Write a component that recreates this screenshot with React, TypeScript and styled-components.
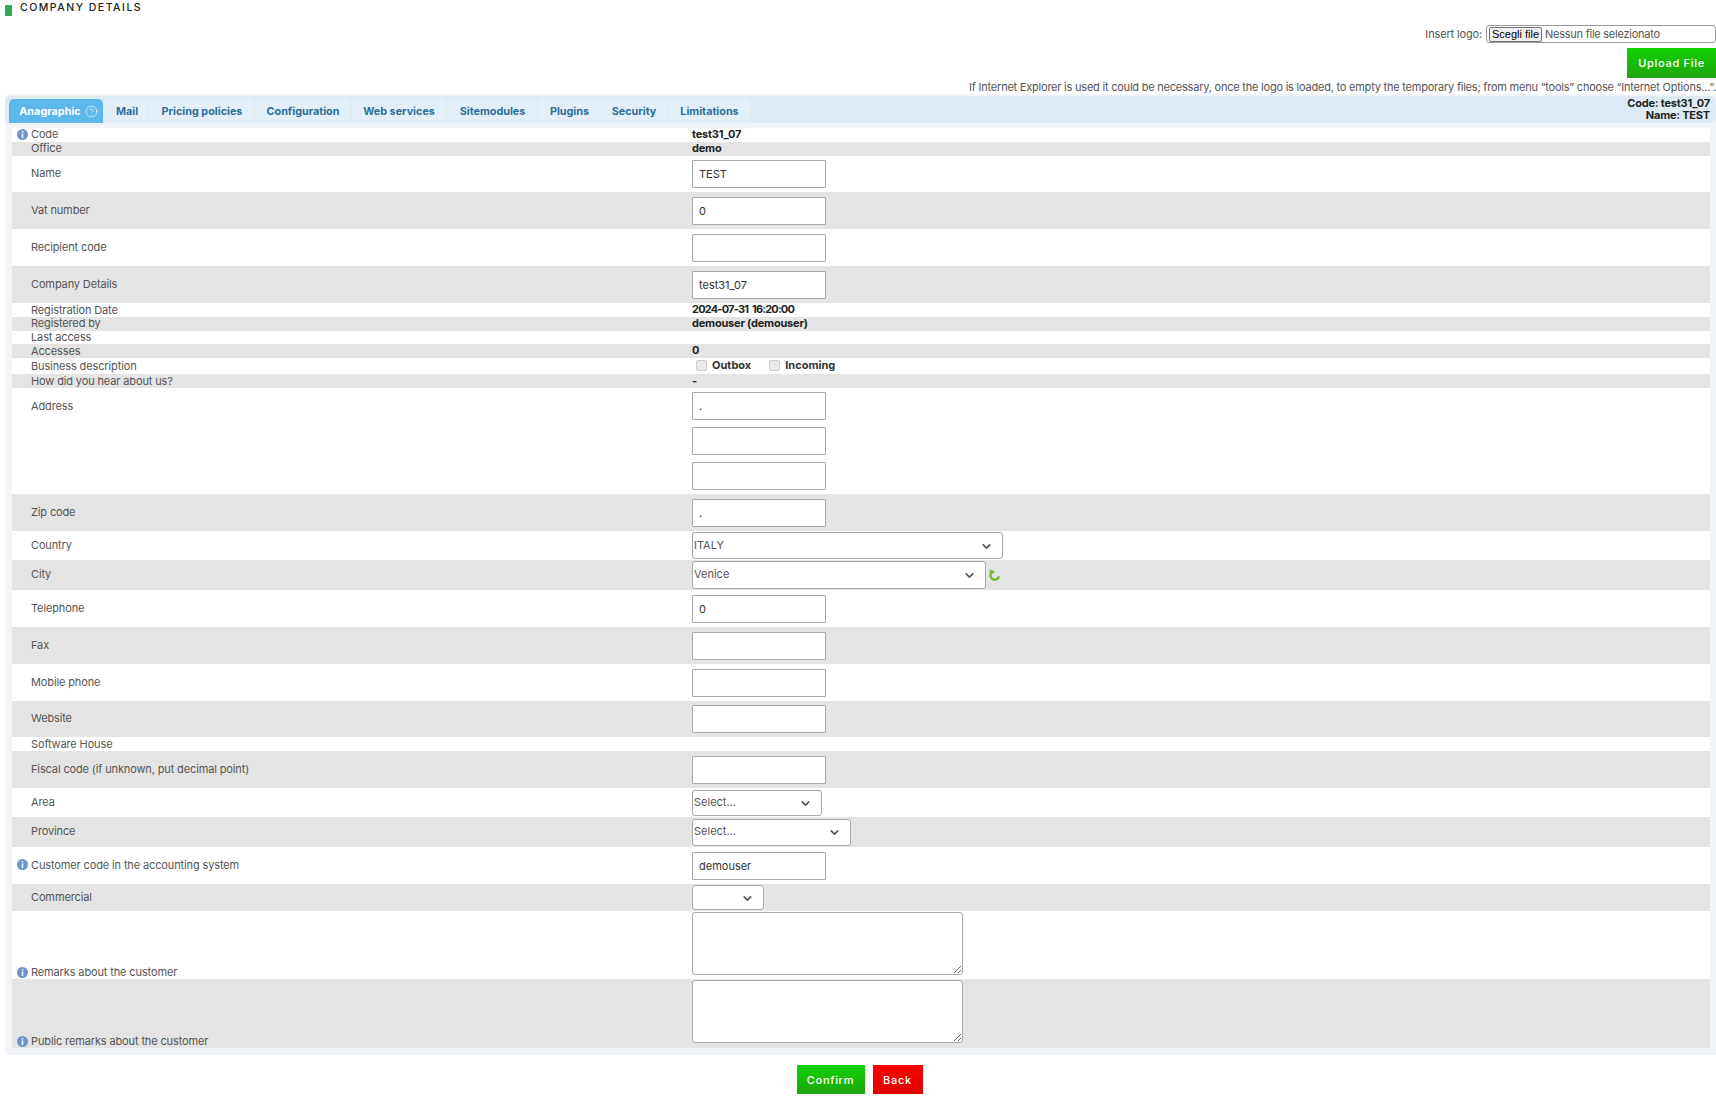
import React from "react";
import styled, { createGlobalStyle } from "styled-components";
import { ChevronDown, CircleHelp } from "lucide-react";

const Global = createGlobalStyle`
  html, body { margin: 0; padding: 0; background: #fff; }
  body { font-family: Inter, "Open Sans", "Liberation Sans", sans-serif; font-size: 11px; color: #4a4a4a; overflow: hidden; }
  * { box-sizing: border-box; }
`;

const Page = styled.div`display: flex; flex-direction: column; width: 1716px; height: 1103px;`;
const TitleBar = styled.div`display: flex; align-items: center; gap: 8px; height: 16px; padding: 4px 0 0 5px;`;
const Marker = styled.span`width: 7px; height: 11px; background: #2eaa55; border-radius: 1px; margin-top: 1px;`;
const Title = styled.h1`margin: -5px 0 0; font-size: 10.5px; font-weight: 500; letter-spacing: 1.5px; color: #222; text-transform: uppercase;`;
const LogoLine = styled.div`display: flex; justify-content: flex-end; align-items: center; gap: 4px; height: 18px; margin-top: 9px;`;
const LogoLabel = styled.label`font-size: 11px; color: #555; letter-spacing: -.15px;`;
const FileBox = styled.div`display: flex; align-items: center; gap: 3px; width: 230px; height: 18px; border: 1px solid #999; border-radius: 3px; padding-left: 2px; letter-spacing: -.25px; color: #555;`;
const FileButton = styled.button`height: 15px; width: 53px; padding: 0; border: 1px solid #767676; border-radius: 2px; background: #efefef; color: #000; font: 11px "Liberation Sans", sans-serif; letter-spacing: 0;`;
const UploadLine = styled.div`display: flex; justify-content: flex-end; margin-top: 5px;`;
const ActionButton = styled.button<{ $tone: "green" | "red"; $w: number; $h: number }>`
  width: ${p => p.$w}px; height: ${p => p.$h}px; padding: 0; border: 0;
  background: ${p => p.$tone === "green" ? "linear-gradient(#10d200,#20a512)" : "linear-gradient(#ff0000,#df0000)"};
  color: #fff; font: 500 11px Inter, sans-serif; letter-spacing: .7px;
`;
const Notice = styled.div`height: 16px; line-height: 18px; text-align: right; white-space: nowrap; font-size: 11px; color: #555; letter-spacing: -.22px;`;
const Panel = styled.div`margin-left: 5px; height: 961px; background: #f1f4f8; padding: 2px 0 0; border-radius: 5px 0 0 5px;`;
const TabBar = styled.div`display: flex; justify-content: space-between; height: 27px; background: #deebf6; border-radius: 5px; padding: 3px 6px 0 4px;`;
const Tabs = styled.div`display: flex; gap: 2px;`;
const Tab = styled.div<{ $active?: boolean; $w: number }>`
  display: flex; align-items: center; justify-content: center; gap: 4px;
  width: ${p => p.$w}px; height: 24px; border-radius: 5px 5px 0 0; font-size: 10.8px; font-weight: 700;
  padding-left: ${p => p.$active ? 5 : 1}px; letter-spacing: ${p => p.$active ? ".03px" : "0"};
  background: ${p => p.$active ? "#5cb7ec" : "#e3eff8"}; color: ${p => p.$active ? "#fff" : "#2b7099"};
`;
const TabInfo = styled.div`text-align: right; font-size: 11px; font-weight: 700; line-height: 12px; color: #222; margin-top: -2px; letter-spacing: -.2px;`;
const Table = styled.div`display: flex; flex-direction: column; margin: 5px 6px 0 7px;`;
const Row = styled.div<{ $h: number; $even: boolean; $align?: string }>`
  display: flex; height: ${p => p.$h}px; background: ${p => p.$even ? "#e4e4e4" : "#fff"};
  align-items: ${p => p.$align || "center"};
`;
const Label = styled.div<{ $pt?: number; $pb?: number }>`
  display: flex; align-items: center; width: 680px; flex: none; letter-spacing: -.13px;
  padding: ${p => p.$pt || 0}px 0 ${p => p.$pb ?? 2}px 5px; color: #555;
`;
const IconSlot = styled.span`display: flex; align-items: center; width: 14px; flex: none;`;
const Value = styled.div`display: flex; flex-direction: column; align-items: flex-start; gap: 7px; font-weight: 700; color: #222;`;
const AddressStack = styled(Value)`padding-top: 4px;`;
const ValueText = styled.span<{ $tight?: boolean }>`
  display: block; margin-top: -2px; letter-spacing: ${p => p.$tight ? "-.8px" : "-.2px"}; word-spacing: ${p => p.$tight ? "2px" : "0"};
`;
const InlineValue = styled.div`display: flex; align-items: center; gap: 3px;`;
const TextInput = styled.input`
  width: 134px; height: 28px; padding: 0 6px; border: 1px solid #a8a8a8; border-radius: 1px;
  background: #fff; font: 11px Inter, sans-serif; color: #333; outline: none;
`;
const SelectWrap = styled.div<{ $w: number; $h: number }>`position: relative; width: ${p => p.$w}px; height: ${p => p.$h}px;`;
const Select = styled.select`
  appearance: none; width: 100%; height: 100%; padding: 0 0 2px 1px; border: 1px solid #a8a8a8; border-radius: 3px;
  background: #fff; font: 11px Inter, sans-serif; color: #555;
`;
const Chevron = styled(ChevronDown)`position: absolute; right: 10px; top: 50%; margin-top: -6px; pointer-events: none; color: #555;`;
const TextArea = styled.textarea`width: 271px; height: 63px; margin-top: 1px; border: 1px solid #a8a8a8; border-radius: 3px; background: #fff; display: block;`;
const Check = styled.span`width: 11px; height: 11px; border: 1px solid #ccc; border-radius: 2px; background: #e9e9e9;`;
const CheckLine = styled.div`display: flex; align-items: center; padding-left: 4px; margin-top: -1px;`;
const CheckLabel = styled.span`margin: -2px 18px 0 5px; font-weight: 700; color: #333;`;
const Footer = styled.div`display: flex; justify-content: center; gap: 8px; padding: 10px 0 0 0; margin-left: 3px;`;

const Info = () => (
  <svg width="11" height="11" viewBox="0 0 11 11"><circle cx="5.5" cy="5.5" r="5.5" fill="#6d96c6" /><rect x="4.7" y="2" width="1.6" height="1.5" fill="#eef4fb" /><rect x="4.7" y="4.4" width="1.6" height="4.6" fill="#eef4fb" /></svg>
);
const Refresh = () => (
  <svg width="12" height="12" viewBox="0 0 12 12"><path d="M2.4 3.6A4.3 4.3 0 1 0 9.9 7.2" fill="none" stroke="#74ba30" strokeWidth="2.4" /><path d="M6 0v6L1 3z" fill="#74ba30" transform="rotate(170 3.5 3)" /></svg>
);

type R = { l: string; h: number; info?: boolean; v: React.ReactNode; align?: string; pt?: number; pb?: number };
const inp = (v = "") => <TextInput defaultValue={v} />;
const sel = (w: number, h: number, t: string) => (
  <SelectWrap $w={w} $h={h}><Select><option>{t}</option></Select><Chevron size={13} strokeWidth={3} /></SelectWrap>
);
const txt = (t: string, tight = false) => <ValueText $tight={tight}>{t}</ValueText>;

const rows: R[] = [
  { l: "Code", h: 14, info: true, v: txt("test31_07") },
  { l: "Office", h: 14, v: txt("demo") },
  { l: "Name", h: 36, v: inp("TEST") },
  { l: "Vat number", h: 37, v: inp("0") },
  { l: "Recipient code", h: 37, v: inp() },
  { l: "Company Details", h: 37, v: inp("test31_07") },
  { l: "Registration Date", h: 14, pb: 0, v: txt("2024-07-31 16:20:00", true) },
  { l: "Registered by", h: 14, v: txt("demouser (demouser)") },
  { l: "Last access", h: 13, v: "" },
  { l: "Accesses", h: 14, pb: 0, v: txt("0") },
  { l: "Business description", h: 16, pb: 0, v: <CheckLine><Check /><CheckLabel>Outbox</CheckLabel><Check /><CheckLabel>Incoming</CheckLabel></CheckLine> },
  { l: "How did you hear about us?", h: 14, pb: 0, v: "-" },
  { l: "Address", h: 106, align: "flex-start", pt: 11, v: <AddressStack>{inp(".")}{inp()}{inp()}</AddressStack> },
  { l: "Zip code", h: 37, v: inp(".") },
  { l: "Country", h: 29, v: sel(311, 27, "ITALY") },
  { l: "City", h: 30, v: <InlineValue>{sel(294, 28, "Venice")}<Refresh /></InlineValue> },
  { l: "Telephone", h: 37, v: inp("0") },
  { l: "Fax", h: 37, v: inp() },
  { l: "Mobile phone", h: 37, v: inp() },
  { l: "Website", h: 36, v: inp() },
  { l: "Software House", h: 14, pb: 0, v: "" },
  { l: "Fiscal code (if unknown, put decimal point)", h: 37, v: inp() },
  { l: "Area", h: 29, v: sel(130, 26, "Select...") },
  { l: "Province", h: 30, v: sel(159, 27, "Select...") },
  { l: "Customer code in the accounting system", h: 37, info: true, v: inp("demouser") },
  { l: "Commercial", h: 27, v: sel(72, 25, "") },
  { l: "Remarks about the customer", h: 68, info: true, align: "flex-start", pt: 54, pb: 0, v: <TextArea /> },
  { l: "Public remarks about the customer", h: 69, info: true, align: "flex-start", pt: 55, pb: 0, v: <TextArea /> },
];

const tabs: [string, number][] = [["Mail", 43], ["Pricing policies", 103], ["Configuration", 95], ["Web services", 93], ["Sitemodules", 90], ["Plugins", 60], ["Security", 65], ["Limitations", 82]];

export default function App() {
  return (
    <Page>
      <Global />
      <TitleBar><Marker /><Title>Company details</Title></TitleBar>
      <LogoLine>
        <LogoLabel>Insert logo:</LogoLabel>
        <FileBox><FileButton>Scegli file</FileButton><span>Nessun file selezionato</span></FileBox>
      </LogoLine>
      <UploadLine><ActionButton $tone="green" $w={89} $h={30}>Upload File</ActionButton></UploadLine>
      <Notice>If Internet Explorer is used it could be necessary, once the logo is loaded, to empty the temporary files; from menu “tools” choose “Internet Options...”.</Notice>
      <Panel>
        <TabBar>
          <Tabs>
            <Tab $active $w={94}>Anagraphic <CircleHelp size={13} strokeWidth={1.2} /></Tab>
            {tabs.map(([t, w]) => <Tab key={t} $w={w}>{t}</Tab>)}
          </Tabs>
          <TabInfo>Code: test31_07<br />Name: TEST</TabInfo>
        </TabBar>
        <Table>
          {rows.map((r, i) => (
            <Row key={r.l} $h={r.h} $even={i % 2 === 1} $align={r.align}>
              <Label $pt={r.pt} $pb={r.pb}><IconSlot>{r.info && <Info />}</IconSlot>{r.l}</Label>
              <Value>{r.v}</Value>
            </Row>
          ))}
        </Table>
      </Panel>
      <Footer>
        <ActionButton $tone="green" $w={68} $h={29}>Confirm</ActionButton>
        <ActionButton $tone="red" $w={50} $h={29}>Back</ActionButton>
      </Footer>
    </Page>
  );
}
